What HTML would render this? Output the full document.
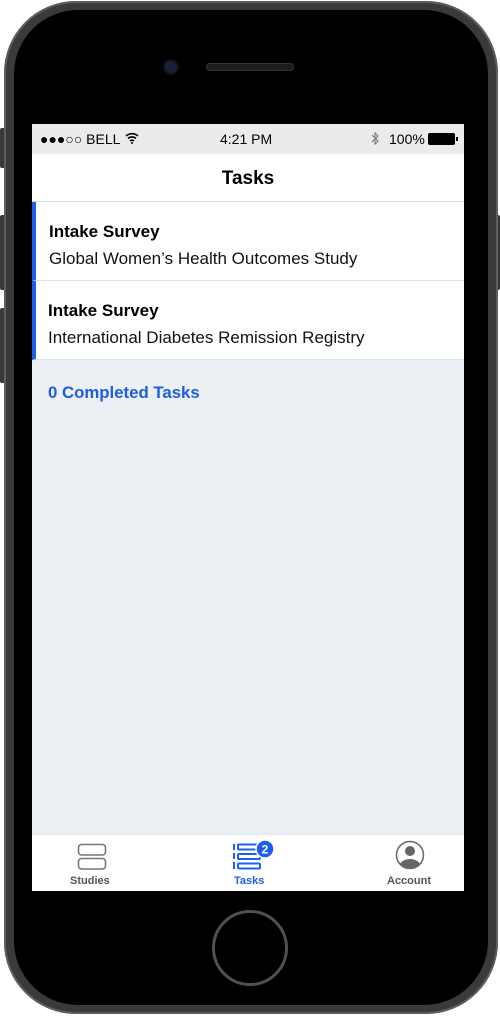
<!DOCTYPE html>
<html><head><meta charset="utf-8"><style>
*{margin:0;padding:0;box-sizing:border-box}
body{width:500px;height:1016px;background:#fff;position:relative;overflow:hidden;font-family:"Liberation Sans",sans-serif}
.btn{position:absolute;left:0;width:7px;background:#3a3a3c;border-radius:2px}
.phone{position:absolute;left:4px;top:1px;width:494px;height:1013px;border-radius:72px;background:#3a3a3c;box-shadow:inset 0 0 0 2px #5e5e60}
.inner{position:absolute;left:10px;top:9px;right:10px;bottom:9px;border-radius:64px;background:#000}
.screen{position:absolute;left:32px;top:124px;width:432px;height:767px;background:#eceff3;overflow:hidden}
.status{height:30px;background:#ebebeb;position:relative;font-size:14px;color:#000}
.nav{height:48px;background:#fff;border-bottom:1px solid #d6dcea;text-align:center;font-weight:bold;font-size:19px;line-height:50px}
.row{height:79px;background:#fff;border-bottom:1px solid #dde1ea;position:relative;border-left:4px solid #1f5ff0}
.row b{position:absolute;left:13px;top:20px;font-size:17px}
.row span{position:absolute;left:13px;top:47px;font-size:17px;color:#111}
.done{color:#1b5fe0;font-weight:bold;font-size:16.8px;position:absolute;left:16px;top:259px}
.tab{position:absolute;left:0;top:710px;width:432px;height:57px;background:#fff;border-top:1px solid #e3e6ec}
.tl{position:absolute;top:40px;font-size:11px;font-weight:bold;color:#555}
</style></head><body>
<div class="btn" style="top:128px;height:40px"></div>
<div class="btn" style="top:215px;height:75px"></div>
<div class="btn" style="top:308px;height:75px"></div>
<div class="btn" style="left:494px;top:215px;height:75px;width:6px"></div>
<div class="phone"><div class="inner"></div></div>
<div style="position:absolute;left:165px;top:61px;width:12px;height:12px;border-radius:50%;background:#1a1f3a;box-shadow:0 0 0 2px #111"></div>
<div style="position:absolute;left:206px;top:63px;width:88px;height:8px;border-radius:4px;background:#1c1c1e;border:1px solid #333"></div>
<div style="position:absolute;left:212px;top:910px;width:76px;height:76px;border-radius:50%;border:3px solid #505054"></div>
<div class="screen">
 <div class="status">
  <span style="position:absolute;left:8px;top:7px">●●●○○ BELL</span>
  <svg style="position:absolute;left:93px;top:8px" width="14" height="12" viewBox="0 0 14 12"><path d="M1 4a9 9 0 0 1 12 0M3 6.5a6 6 0 0 1 8 0M5 9a3 3 0 0 1 4 0" stroke="#000" stroke-width="1.6" fill="none"/><circle cx="7" cy="11" r="1" fill="#000"/></svg>
  <span style="position:absolute;left:188px;top:7px">4:21 PM</span>
  <svg style="position:absolute;left:339px;top:7px" width="9" height="15" viewBox="0 0 9 15"><path d="M1 4l6 6-3 3V2l3 3-6 6" stroke="#777" stroke-width="1.1" fill="none"/></svg>
  <span style="position:absolute;left:357px;top:7px">100%</span>
  <div style="position:absolute;left:396px;top:9px;width:27px;height:12px;background:#000;border-radius:2px"></div>
  <div style="position:absolute;left:424px;top:13px;width:2px;height:4px;background:#000"></div>
 </div>
 <div class="nav">Tasks</div>
 <div class="row"><b>Intake Survey</b><span>Global Women’s Health Outcomes Study</span></div>
 <div class="row"><b style="left:12px">Intake Survey</b><span style="left:12px">International Diabetes Remission Registry</span></div>
 <div class="done">0 Completed Tasks</div>
 <div class="tab">
  <svg style="position:absolute;left:45px;top:8px" width="30" height="28" viewBox="0 0 30 28"><rect x="1.5" y="1.5" width="27" height="10.5" rx="3" fill="none" stroke="#777" stroke-width="1.6"/><rect x="1.5" y="15.5" width="27" height="10.5" rx="3" fill="none" stroke="#777" stroke-width="1.6"/></svg>
  <div class="tl" style="left:38px">Studies</div>
  <svg style="position:absolute;left:200px;top:4px" width="46" height="32" viewBox="0 0 46 32"><g stroke="#1f5ff0" stroke-width="2" fill="none"><path d="M2 5v6M2 14v6M2 23v7"/><rect x="6" y="5.5" width="22" height="5" rx="1"/><rect x="6" y="15" width="22" height="5" rx="1"/><rect x="6" y="24.5" width="22" height="5" rx="1"/></g><circle cx="33" cy="10" r="9" fill="#1f5ff0" stroke="#fff" stroke-width="1.5"/><text x="33" y="14.5" font-size="12" font-weight="bold" fill="#fff" text-anchor="middle" font-family="Liberation Sans">2</text></svg>
  <div class="tl" style="left:202px;color:#1f5ff0">Tasks</div>
  <svg style="position:absolute;left:363px;top:5px" width="30" height="30" viewBox="0 0 30 30"><defs><clipPath id="c"><circle cx="15" cy="15" r="13"/></clipPath></defs><circle cx="15" cy="15" r="13.5" fill="none" stroke="#666" stroke-width="1.5"/><g clip-path="url(#c)" fill="#666"><circle cx="15" cy="11" r="5"/><ellipse cx="15" cy="27" rx="11" ry="8"/></g></svg>
  <div class="tl" style="left:355px">Account</div>
 </div>
</div>
</body></html>
